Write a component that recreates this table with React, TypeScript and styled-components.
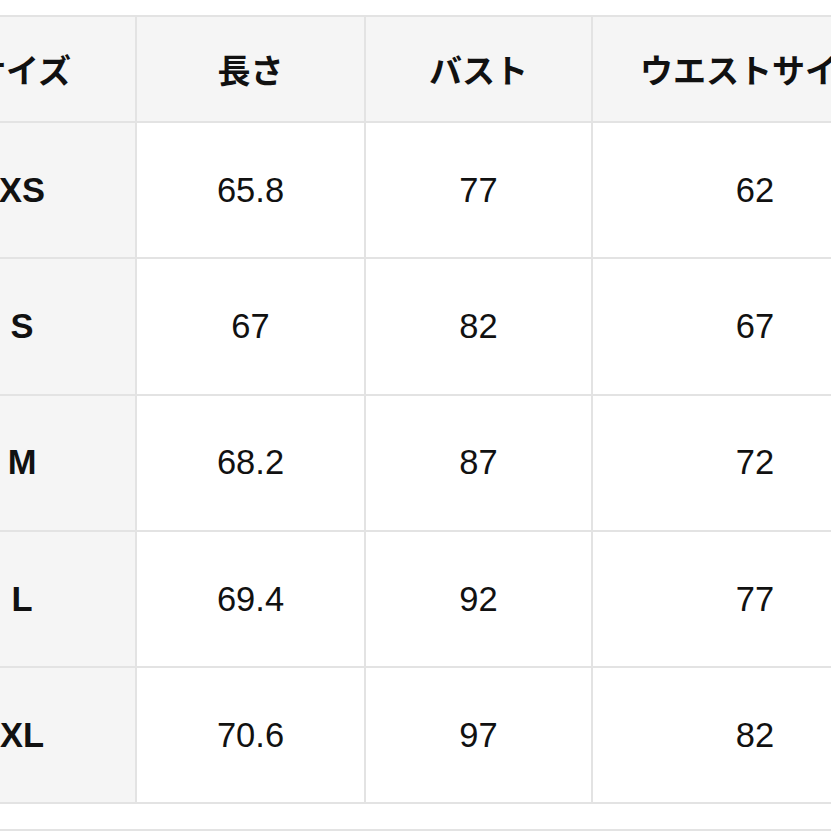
import React from 'react';
import styled, { createGlobalStyle } from 'styled-components';

const GlobalStyle = createGlobalStyle`
  html, body {
    margin: 0;
    padding: 0;
    background: #ffffff;
    overflow: hidden;
  }
  body {
    font-family: "Liberation Sans", Arial, "Noto Sans CJK JP", sans-serif;
    color: #111111;
  }
`;

const Page = styled.div`
  width: 831px;
  height: 831px;
  overflow: hidden;
  padding-top: 15px;
  box-sizing: border-box;
`;

const SizeTable = styled.table`
  margin-left: -93px;
  border-collapse: collapse;
  table-layout: fixed;
  width: 1010px;
`;

const HeadCell = styled.th`
  height: 104px;
  padding: 0;
  background: #f5f5f5;
  border: 2px solid #e3e3e3;
  font-family: "Noto Sans CJK JP", "Liberation Sans", sans-serif;
  font-size: 33px;
  font-weight: 700;
  text-align: center;
  vertical-align: middle;
  white-space: nowrap;
`;

const Cell = styled.td<{ $label?: boolean }>`
  height: 134.3px;
  padding: 0;
  background: ${(p) => (p.$label ? '#f5f5f5' : '#ffffff')};
  border: 2px solid #e3e3e3;
  font-size: 34.5px;
  font-weight: ${(p) => (p.$label ? 700 : 400)};
  text-align: center;
  vertical-align: middle;
`;

const NextBlock = styled.div`
  margin-top: 25px;
  border-top: 2px solid #e3e3e3;
  height: 10px;
`;

const widths = [228, 229, 227, 326];
const headers = ['サイズ', '長さ', 'バスト', 'ウエストサイズ'];
const rows = [
  ['XS', '65.8', '77', '62'],
  ['S', '67', '82', '67'],
  ['M', '68.2', '87', '72'],
  ['L', '69.4', '92', '77'],
  ['XL', '70.6', '97', '82'],
];

export default function App() {
  return (
    <>
      <GlobalStyle />
      <Page>
        <SizeTable>
          <colgroup>
            {widths.map((w, i) => (
              <col key={i} style={{ width: w }} />
            ))}
          </colgroup>
          <thead>
            <tr>
              {headers.map((h) => (
                <HeadCell key={h}>{h}</HeadCell>
              ))}
            </tr>
          </thead>
          <tbody>
            {rows.map((r) => (
              <tr key={r[0]}>
                {r.map((v, i) => (
                  <Cell key={i} $label={i === 0}>
                    {v}
                  </Cell>
                ))}
              </tr>
            ))}
          </tbody>
        </SizeTable>
        <NextBlock />
      </Page>
    </>
  );
}
